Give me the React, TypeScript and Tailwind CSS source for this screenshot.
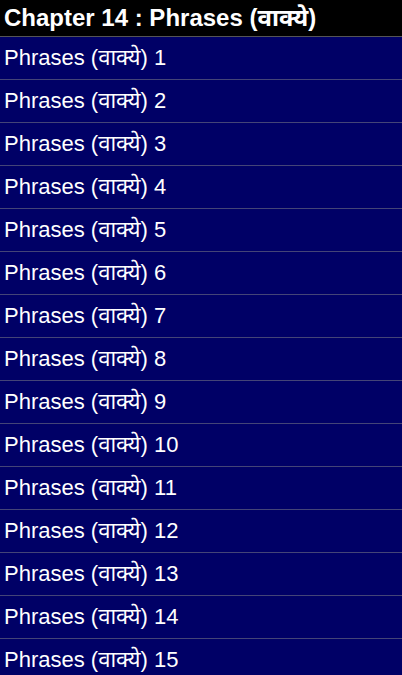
import React from "react";

const items = Array.from({ length: 15 }, (_, i) => i + 1);

export default function App() {
  return (
    <div className="min-h-screen bg-[#000066] text-white font-['Liberation_Sans',Arial,'Noto_Sans',sans-serif]">
      <div className="h-[37px] bg-black border-b border-[#555] flex items-center px-[4px]">
        <h1 className="text-[24px] font-bold leading-none">Chapter 14 : Phrases (वाक्ये)</h1>
      </div>
      <ul>
        {items.map((n) => (
          <li
            key={n}
            className="h-[43px] border-b border-[#444477] flex items-center px-[4px] text-[22px] leading-none"
          >
            Phrases (वाक्ये) {n}
          </li>
        ))}
      </ul>
    </div>
  );
}
